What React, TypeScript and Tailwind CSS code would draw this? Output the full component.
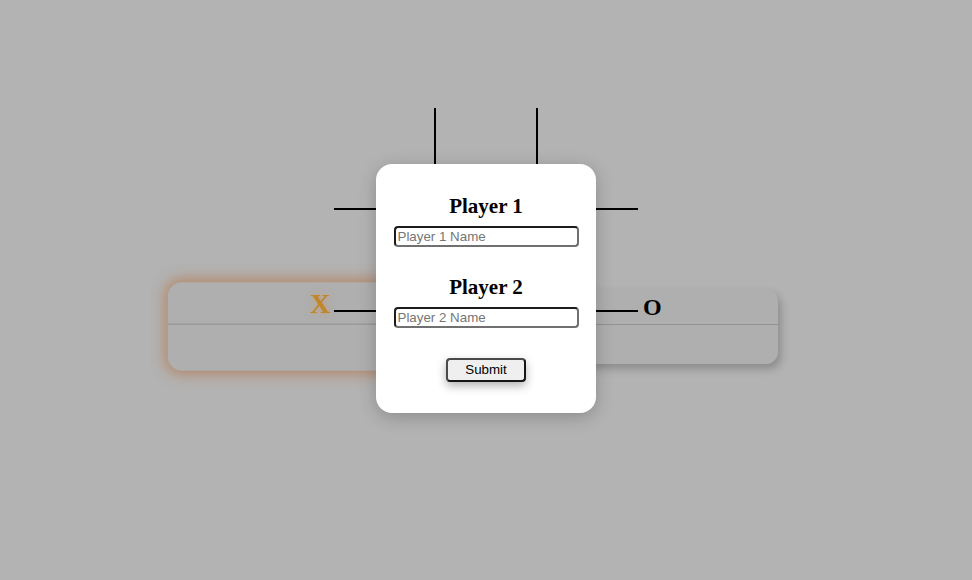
import React, { useState } from 'react';

// board: 3x3 with only the inner lines drawn
const cells = Array.from({ length: 9 }, (_, i) => i);

const PlayerCard = ({ symbol, active }: { symbol: string; active?: boolean }) => (
  <div
    className={
      active
        ? 'w-[292px] h-[75px] bg-[#afafaf] rounded-xl flex flex-col scale-[1.18] shadow-[0_0_12px_2px_rgba(180,115,70,0.7)]'
        : 'w-[292px] h-[75px] bg-[#afafaf] rounded-xl flex flex-col shadow-[3px_5px_8px_rgba(0,0,0,0.22)]'
    }
  >
    <div className={active ? 'h-[35px] flex items-center justify-end pr-[154px]' : 'h-[35px] flex items-center pl-[157px]'}>
      <span
        className={
          active
            ? "font-['Liberation_Serif',serif] font-bold text-[24px] leading-none text-[#c2862a] [text-shadow:0_0_6px_rgba(210,145,70,0.5)]"
            : "font-['Liberation_Serif',serif] font-bold text-[24px] leading-none text-black"
        }
      >
        {symbol}
      </span>
    </div>
    <div className="h-px bg-[#939393]" />
    <div className="flex-1" />
  </div>
);

const Board = () => (
  <div className="relative z-10 grid grid-cols-[102px_102px_100px] grid-rows-[102px_102px_100px] w-[304px] h-[304px]">
    {cells.map((i) => {
      const r = Math.floor(i / 3);
      const c = i % 3;
      let cls = 'border-black';
      if (c < 2) cls += ' border-r-2';
      if (r < 2) cls += ' border-b-2';
      return <div key={i} className={cls} />;
    })}
  </div>
);

export default function App() {
  const [p1, setP1] = useState('');
  const [p2, setP2] = useState('');

  return (
    <div className="relative w-full h-[580px] bg-[#b3b3b3] overflow-hidden">
      {/* Game area */}
      <div className="pt-[108px] flex justify-center">
        <div className="grid w-[584px]">
          <div className="col-start-1 row-start-1 self-start mt-[181px] flex">
            <PlayerCard symbol="X" active />
            <PlayerCard symbol="O" />
          </div>
          <div className="col-start-1 row-start-1 justify-self-center">
            <Board />
          </div>
        </div>
      </div>

      {/* Names modal */}
      <div className="absolute inset-0 z-20 flex items-start justify-center pt-[164px]">
        <div className="w-[220px] h-[249px] bg-white rounded-2xl shadow-[0_4px_18px_rgba(0,0,0,0.22)] flex flex-col items-center pt-[30px]">
          <h2 className="font-['Liberation_Serif',serif] font-bold text-[21px] leading-[24px] text-black">Player 1</h2>
          <input
            type="text"
            value={p1}
            onChange={(e) => setP1(e.target.value)}
            placeholder="Player 1 Name"
            className="mt-2 w-[185px] h-[21px] px-[2px] rounded-[4px] border-2 border-t-[#1c1c1c] border-l-[#1c1c1c] border-b-[#707070] border-r-[#707070] bg-white font-['Liberation_Sans',sans-serif] text-[13.33px] text-black placeholder:text-[#757575] outline-none"
          />
          <h2 className="mt-[28px] font-['Liberation_Serif',serif] font-bold text-[21px] leading-[24px] text-black">Player 2</h2>
          <input
            type="text"
            value={p2}
            onChange={(e) => setP2(e.target.value)}
            placeholder="Player 2 Name"
            className="mt-2 w-[185px] h-[21px] px-[2px] rounded-[4px] border-2 border-t-[#1c1c1c] border-l-[#1c1c1c] border-b-[#707070] border-r-[#707070] bg-white font-['Liberation_Sans',sans-serif] text-[13.33px] text-black placeholder:text-[#757575] outline-none"
          />
          <button className="mt-[30px] w-[80px] h-[24px] rounded-[4px] border-2 border-t-[#4a4a4a] border-l-[#4a4a4a] border-b-[#161616] border-r-[#161616] bg-[#efefef] font-['Liberation_Sans',sans-serif] text-[13.33px] text-black shadow-[0_4px_10px_rgba(0,0,0,0.3)]">
            Submit
          </button>
        </div>
      </div>
    </div>
  );
}
